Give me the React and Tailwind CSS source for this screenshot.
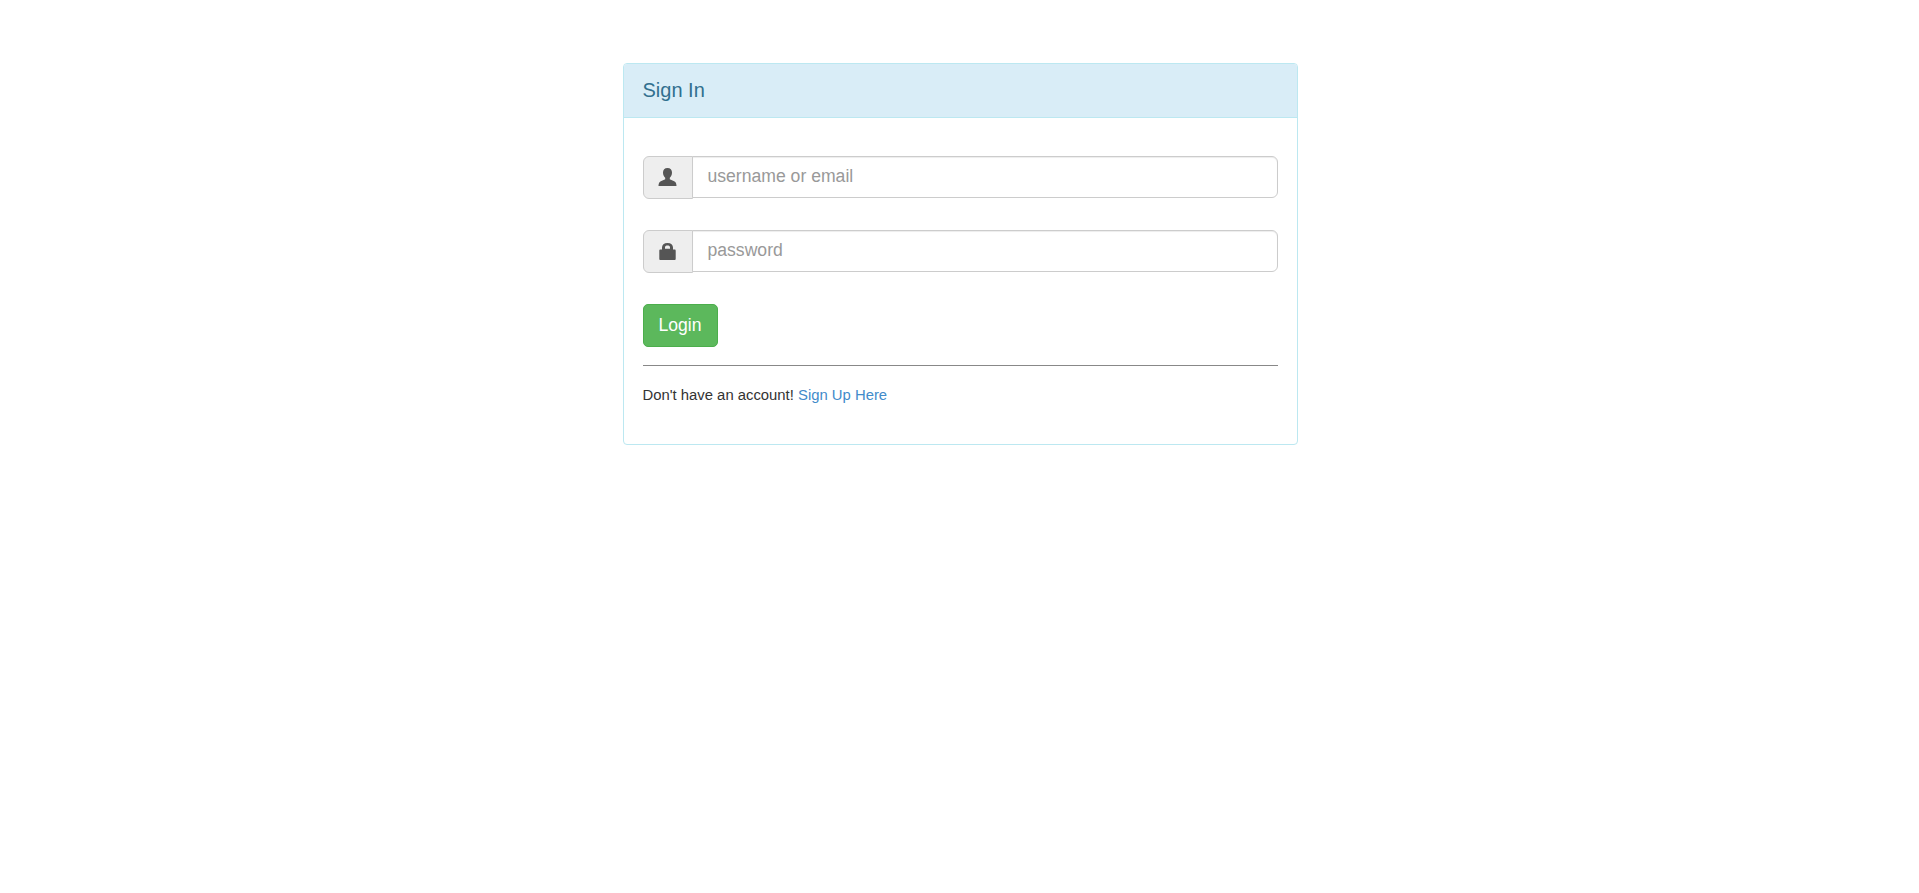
import React from 'react';

const UserGlyph = () => (
  <svg viewBox="0 0 19 18" className="h-[18px] w-[19px] fill-[#555555]">
    <path d="M9.500 0C6.600 0 5 1.900 5 4.500c0 2.300.9 4.200 2.200 5.300v1.500c-.7.8-4.600 1.700-5.700 2.900C.8 15.100.5 16.500.5 18h18c0-1.500-.3-2.900-1-3.800-1.100-1.200-5-2.100-5.700-2.900V9.800C13.100 8.700 14 6.800 14 4.500 14 1.900 12.400 0 9.500 0z" />
  </svg>
);

const LockGlyph = () => (
  <svg viewBox="0 0 17 17" className="h-[17px] w-[17px] fill-[#555555]">
    <path fillRule="evenodd" d="M3 6.500V4.500C3 1.800 5 0 8.500 0S14 1.800 14 4.500v2h1.500c.8 0 1.200.5 1.200 1.200v8.100c0 .8-.4 1.200-1.200 1.200h-14C.7 17 .3 16.600.3 15.800V7.700c0-.7.4-1.200 1.200-1.200H3zm3-.7h5V4.300C11 3 10 2.400 8.500 2.400S6 3 6 4.300v1.500z" />
  </svg>
);

const InputRow = ({ icon, placeholder, type }) => (
  <div className="mb-[31px] flex items-start">
    <span className="flex h-[43px] w-[50px] shrink-0 items-center justify-center rounded-l-[6px] border border-[#cccccc] bg-[#eeeeee] pb-px">
      {icon}
    </span>
    <input
      type={type}
      placeholder={placeholder}
      className="-ml-px h-[42px] min-w-0 flex-1 rounded-r-[6px] border border-[#cccccc] bg-white pb-[2px] pl-[15px] pr-4 text-[17.6px] text-[#555555] shadow-[inset_0_1px_1px_rgba(0,0,0,0.075)] outline-none placeholder:text-[#999999]"
    />
  </div>
);

export default function App() {
  return (
    <div className="flex min-h-[893px] justify-center bg-white pl-px pt-[63px] font-['Liberation_Sans',Arial,sans-serif] text-[14.85px] text-[#333333]">
      <div className="h-[382px] w-[675px] rounded-[4px] border border-[#bce8f1] bg-white">
        <div className="flex h-[54px] items-center rounded-t-[3px] border-b border-[#bce8f1] bg-[#d9edf7] px-[19px] pb-[2px] text-[20px] text-[#31708f]">
          Sign In
        </div>
        <form className="px-[19px] pt-[38px]">
          <InputRow icon={<UserGlyph />} placeholder="username or email" type="text" />
          <InputRow icon={<LockGlyph />} placeholder="password" type="password" />
          <button
            type="button"
            className="h-[43px] rounded-[5px] border border-[#4cae4c] bg-[#5cb85c] px-[15px] pb-[1px] text-[17.6px] text-white"
          >
            Login
          </button>
          <hr className="mt-[18px] border-0 border-t border-t-[#888888]" />
          <p className="mt-[19px] leading-5">
            Don't have an account! <a href="#" className="text-[#428bca]">Sign Up Here</a>
          </p>
        </form>
      </div>
    </div>
  );
}
